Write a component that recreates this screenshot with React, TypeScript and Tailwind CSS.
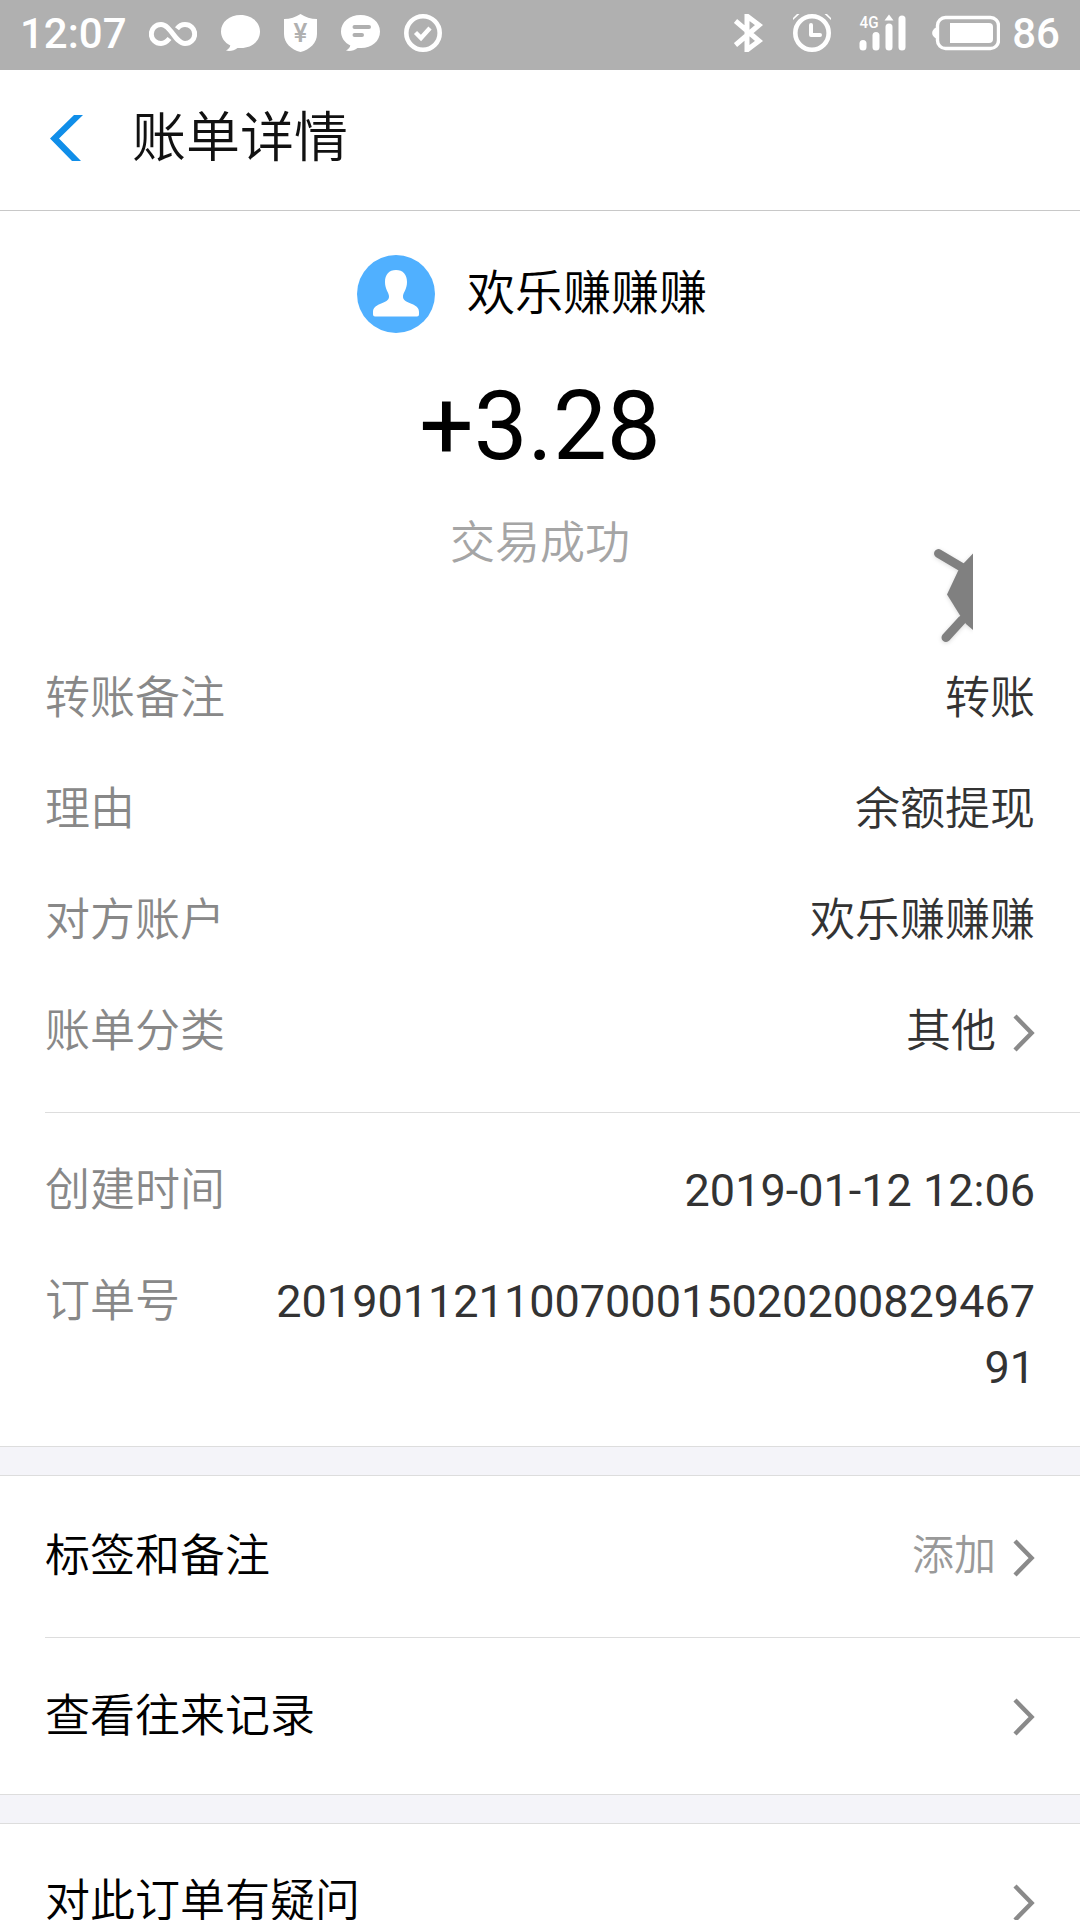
import type { ReactNode } from 'react';

interface DetailRowProps {
  label: string;
  value: string;
  arrow?: boolean;
}

interface LinkRowProps {
  label: string;
  action?: string;
}

const details: DetailRowProps[] = [
  { label: '转账备注', value: '转账' },
  { label: '理由', value: '余额提现' },
  { label: '对方账户', value: '欢乐赚赚赚' },
  { label: '账单分类', value: '其他', arrow: true },
];

const Chevron = () => (
  <svg className="ml-[17px] mt-[2px] h-[38px] w-[22px] shrink-0" viewBox="0 0 22 38" fill="none">
    <path d="M2 2 L18.6 19 L2 36" stroke="#8a8a8a" strokeWidth="4.4" />
  </svg>
);

const DetailRow = ({ label, value, arrow }: DetailRowProps) => (
  <div className="flex h-[111px] items-center justify-between pr-[45px] pt-px">
    <span className="text-[#888888]">{label}</span>
    <div className="flex items-center text-[#333333]">
      <span>{value}</span>
      {arrow && <Chevron />}
    </div>
  </div>
);

const LinkRow = ({ label, action }: LinkRowProps) => (
  <div className="flex h-full items-center justify-between pr-[45px]">
    <span className="pt-px text-black">{label}</span>
    <div className="flex items-center">
      {action && <span className="pb-[2px] text-[42px] leading-[66px] text-[#999999]">{action}</span>}
      <Chevron />
    </div>
  </div>
);

const Divider = () => <div className="h-[30px] shrink-0 border-y border-[#dddddd] bg-[#f4f4f9]" />;

const Bubble = ({ children }: { children?: ReactNode }) => (
  <svg className="h-[38px] w-[39px]" viewBox="0 0 39 38">
    <path d="M19.5 1 C30.5 1 39 8 39 17.5 C39 27 31 34 20 34 L16.5 34 C13.5 36.5 9 37.5 5 36.6 C7.3 35.2 9 33.6 9.3 31.5 C3.5 28.5 0 23.5 0 17.5 C0 8 8.5 1 19.5 1Z" fill="#fff" />
    {children}
  </svg>
);

const StatusBar = () => (
  <div className="flex h-[70px] shrink-0 items-center justify-between bg-[#b0b0b0] pb-1 pl-5 pr-5 text-white">
    <div className="flex items-center gap-6">
      <span className="w-[105px] pt-[2px] text-[42px] font-medium leading-[66px]">12:07</span>

      <svg className="h-[38px] w-12" viewBox="0 0 48 38" fill="none">
        <path d="M20.5 24.5 C18 27.5 15.5 29.5 12 29.5 A9.7 9.5 0 0 1 12 10.5 C22 10.5 26 29.5 36 29.5 A9.7 9.5 0 0 0 36 10.5 C32.5 10.5 30 12 28 14.7" stroke="#fff" strokeWidth="5" />
      </svg>

      <Bubble />

      <svg className="h-[38px] w-[33px]" viewBox="0 0 33 38">
        <path d="M16.5 0 C21 3 27 5 33 5 V20 C33 29 26 35.5 16.5 38 C7 35.5 0 29 0 20 V5 C6 5 12 3 16.5 0Z" fill="#fff" />
        <text x="16.5" y="28" textAnchor="middle" fontSize="26" fontWeight="500" fill="#b0b0b0">¥</text>
      </svg>

      <Bubble>
        <path d="M13.5 13 H28 M13.5 21 H21" stroke="#b0b0b0" strokeWidth="4" strokeLinecap="round" />
      </Bubble>

      <svg className="h-[38px] w-[38px]" viewBox="0 0 38 38" fill="none" stroke="#fff">
        <circle cx="19" cy="19" r="16.7" strokeWidth="4.6" />
        <path d="M11.5 18.5 L17 24 L26 14" strokeWidth="4.4" />
      </svg>
    </div>

    <div className="flex items-center">
      <svg className="h-[38px] w-[30px]" viewBox="0 0 30 38" fill="none">
        <path d="M1.5 7 L25 27 L13 36 V2 L25 11 L1.5 31" stroke="#fff" strokeWidth="5" />
      </svg>

      <svg className="ml-[29px] h-[38px] w-[38px]" viewBox="0 0 38 38" fill="none" stroke="#fff">
        <circle cx="19" cy="19" r="16.7" strokeWidth="4.6" />
        <path d="M18 11 V21 H27" strokeWidth="4" strokeLinecap="round" strokeLinejoin="round" />
        <path d="M0 4 L4 0 H6.5 L0 6Z M38 4 L34 0 H31.5 L38 6Z" fill="#fff" stroke="none" />
      </svg>

      <svg className="ml-[28px] h-[38px] w-[47px] overflow-visible" viewBox="-1 0 47 38" fill="#fff">
        <text x="-0.5" y="14" fontSize="17" fontWeight="500" textLength="19" lengthAdjust="spacingAndGlyphs">4G</text>
        <rect x="-0.5" y="26" width="7" height="10.5" rx="3.5" />
        <rect x="12.5" y="18" width="7" height="18.5" rx="3.5" />
        <rect x="25.5" y="9.5" width="7" height="27" rx="3.5" />
        <path d="M29 0.5 L33.5 6.5 H24.5Z" />
        <rect x="38.5" y="1.5" width="7" height="35" rx="3.5" />
      </svg>

      <svg className="ml-[26px] h-[38px] w-[68px]" viewBox="0 0 68 38">
        <rect x="5.5" y="3.5" width="61" height="31" rx="8" fill="none" stroke="#fff" strokeWidth="3.4" />
        <path d="M5 13 C-1.5 16 -1.5 22 5 25Z" fill="#fff" />
        <path d="M18 9 H57 A4 4 0 0 1 61 13 V25 A4 4 0 0 1 57 29 H18Z" fill="#fff" />
      </svg>

      <span className="ml-3 pt-[2px] text-[42px] font-medium leading-[66px]">86</span>
    </div>
  </div>
);

const Header = () => (
  <div className="flex h-[141px] shrink-0 items-center border-b border-[#c8c8c8] pb-2 pl-[50px]">
    <svg className="mt-1 h-[46px] w-[33px]" viewBox="0 0 33 46">
      <path d="M24 0 H33 L9 23.5 L31 46 H22 L0 23.5Z" fill="#108ee9" />
    </svg>
    <h1 className="ml-[49px] pt-[6px] text-[54px] font-normal leading-[66px] text-[#111111]">账单详情</h1>
  </div>
);

const Summary = () => (
  <div className="relative flex h-[432px] shrink-0 flex-col items-center">
    <div className="mt-11 flex h-[78px] items-center gap-8 pr-4">
      <svg className="h-[78px] w-[78px]" viewBox="0 0 78 78">
        <circle cx="39" cy="39" r="39" fill="#50b0ff" />
        <path d="M39 15 C46 15 50 19.5 50 27 C50 34 46.5 37 46 41 C45.7 46 50 46.5 55 49 C60 51.3 62 53.5 62 57 V59.5 Q62 61.5 60 61.5 H18 Q16 61.5 16 59.5 V57 C16 53.5 18 51.3 23 49 C28 46.5 32.3 46 32 41 C31.5 37 28 34 28 27 C28 19.5 32 15 39 15Z" fill="#fff" />
      </svg>
      <span className="text-[48px] leading-[66px] text-black">欢乐赚赚赚</span>
    </div>
    <div className="mt-[37px] text-[96px] leading-[112px] text-black">+3.28</div>
    <div className="mt-[29px] leading-[66px] text-[#a5a5a5]">交易成功</div>

    {/* partly hidden floating badge */}
    <svg className="absolute right-[107px] top-[329px] h-[110px] w-[50px]" viewBox="0 0 50 110">
      <g className="drop-shadow-sm">
        <path d="M15.5 13.5 L40 28 M39 80 L23 97.5" stroke="#808080" strokeWidth="9" strokeLinecap="round" />
        <path d="M50 13.5 L40 24 L35 31 L24 54.5 L38 77 L43 84 L50 90Z" fill="#808080" />
      </g>
    </svg>
  </div>
);

const App = () => {
  return (
    <div className="flex h-[1920px] w-[1080px] flex-col overflow-hidden bg-white font-[Roboto,'Noto_Sans_CJK_SC_DemiLight','Noto_Sans_CJK_SC',sans-serif] text-[45px] leading-[66px]">
      <StatusBar />
      <Header />
      <Summary />

      <div className="shrink-0 pl-[45px]">
        <div className="h-[470px] border-b border-[#dddddd]">
          {details.map((item) => (
            <DetailRow key={item.label} {...item} />
          ))}
        </div>
        <div className="h-[333px] pt-[22px]">
          <DetailRow label="创建时间" value="2019-01-12 12:06" />
          <div className="flex justify-between pr-[45px] pt-[23px]">
            <span className="text-[#888888]">订单号</span>
            <span className="w-[760px] break-all text-right text-[#333333]">20190112110070001502020082946791</span>
          </div>
        </div>
      </div>

      <Divider />
      <div className="shrink-0 pl-[45px]">
        <div className="h-[162px] border-b border-[#dddddd]">
          <LinkRow label="标签和备注" action="添加" />
        </div>
        <div className="h-[156px]">
          <LinkRow label="查看往来记录" />
        </div>
      </div>
      <Divider />
      <div className="h-[155px] shrink-0 pl-[45px]">
        <LinkRow label="对此订单有疑问" />
      </div>
    </div>
  );
};

export default App;
